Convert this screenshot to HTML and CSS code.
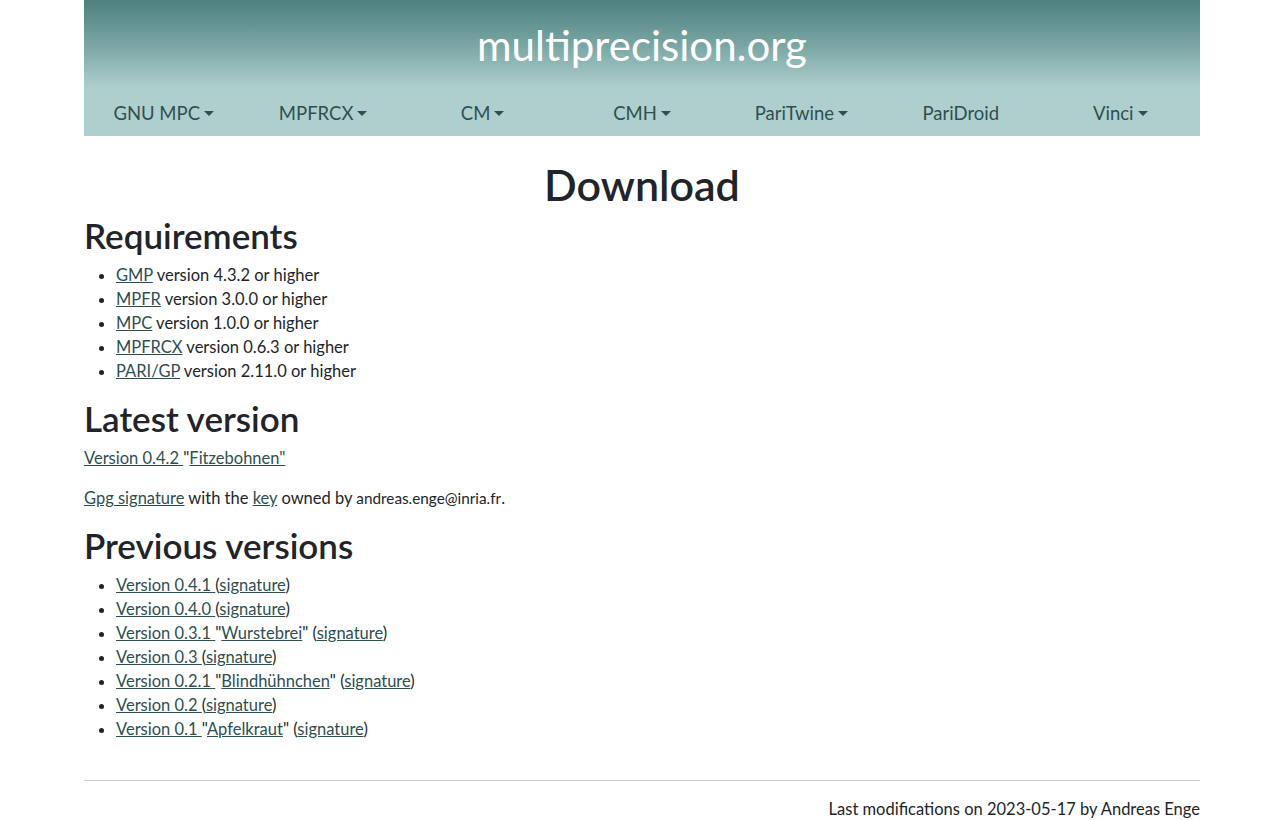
FILE: index.html
```html
<!DOCTYPE html>
<html lang="en">
<head>
    <meta charset="UTF-8">
    <title>multiprecision.org - Download</title>
    <link rel="stylesheet" href="styles.css">
</head>
<body>
<div class="container">

    <!--    header with title and menu     -->
    <header class="banner">
        <div class="site_title">multiprecision.org</div>
        <nav class="menu">
            <span class="menu_item dropdown">GNU MPC</span>
            <span class="menu_item dropdown">MPFRCX</span>
            <span class="menu_item dropdown">CM</span>
            <span class="menu_item dropdown">CMH</span>
            <span class="menu_item dropdown">PariTwine</span>
            <span class="menu_item">PariDroid</span>
            <span class="menu_item dropdown">Vinci</span>
        </nav>
    </header>

    <h1 class="page_title">Download</h1>

    <h2>Requirements</h2>
    <ul>
        <li><a href="#">GMP</a> version 4.3.2 or higher</li>
        <li><a href="#">MPFR</a> version 3.0.0 or higher</li>
        <li><a href="#">MPC</a> version 1.0.0 or higher</li>
        <li><a href="#">MPFRCX</a> version 0.6.3 or higher</li>
        <li><a href="#">PARI/GP</a> version 2.11.0 or higher</li>
    </ul>

    <h2>Latest version</h2>
    <p><a href="#">Version 0.4.2 </a>"<a href="#">Fitzebohnen"</a></p>
    <p><a href="#">Gpg signature</a> with the <a href="#">key</a> owned by <span class="mail">andreas.enge@inria.fr</span>.</p>

    <h2>Previous versions</h2>
    <ul>
        <li><a href="#">Version 0.4.1 </a>(<a href="#">signature</a>)</li>
        <li><a href="#">Version 0.4.0 </a>(<a href="#">signature</a>)</li>
        <li><a href="#">Version 0.3.1 </a>"<a href="#">Wurstebrei</a>" (<a href="#">signature</a>)</li>
        <li><a href="#">Version 0.3 </a>(<a href="#">signature</a>)</li>
        <li><a href="#">Version 0.2.1 </a>"<a href="#">Blindhühnchen</a>" (<a href="#">signature</a>)</li>
        <li><a href="#">Version 0.2 </a>(<a href="#">signature</a>)</li>
        <li><a href="#">Version 0.1 </a>"<a href="#">Apfelkraut</a>" (<a href="#">signature</a>)</li>
    </ul>

    <hr>
    <footer class="footer">Last modifications on 2023-05-17 by Andreas Enge</footer>
</div>
</body>
</html>
```

FILE: styles.css
```css
/*tag*/
body{
    margin: 0;
    font-family: Lato, "Liberation Sans", sans-serif;
    font-size: 16.5px;
    line-height: 24px;
    color: #212529;
    background: #fff;
}
h1, h2{
    font-weight: 600;
    margin: 0;
}
h2{
    font-size: 35px;
    line-height: 40px;
    margin: -1px 0 8px 0;
}
ul{
    margin: 0 0 16px 0;
    padding-left: 32px;
}
p{
    margin: 0 0 16px 0;
}
a{
    color: #2f4f4f;
    text-decoration: underline;
}
hr{
    border: 0;
    border-top: 1px solid #c9c9c9;
    margin: 39px 0 16px 0;
}

/*class*/
.container{
    width: 1116px;
    margin: 0 auto;
}
.banner{
    background: linear-gradient(to bottom, #4d807e 0px, #79a6a4 45px, #aecfce 88px, #aecfce 136px);
    height: 136px;
    display: flex;
    flex-direction: column;
}
.site_title{
    color: #fff;
    text-align: center;
    font-size: 42px;
    line-height: 50px;
    padding-top: 20px;
}
.menu{
    display: flex;
    margin-top: 29px;
}
.menu_item{
    flex: 1;
    text-align: center;
    color: #2f4f4f;
    font-size: 18.5px;
    line-height: 28px;
}
.dropdown::after{
    content: "";
    display: inline-block;
    margin-left: 4px;
    vertical-align: 4px;
    border-top: 5px solid #2f4f4f;
    border-left: 5.5px solid transparent;
    border-right: 5.5px solid transparent;
}
.page_title{
    text-align: center;
    font-size: 43px;
    line-height: 52px;
    margin: 23px 0 5px 0;
}
.mail{
    font-size: 15.3px;
}
.footer{
    text-align: right;
    padding-bottom: 12px;
}
```
